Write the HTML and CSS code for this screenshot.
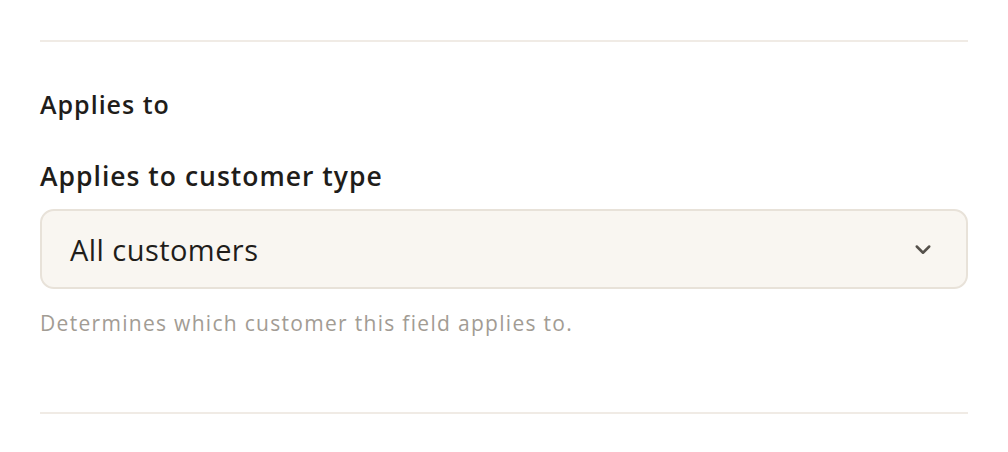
FILE: index.html
```html
<!DOCTYPE html>
<html>
<head>
<meta charset="utf-8">
<link rel="stylesheet" href="styles.css">
</head>
<body>
<div class="page">
  <hr class="divider">
  <section class="section">
    <h2 class="section-title">Applies to</h2>
    <div class="field">
      <label class="field-label">Applies to customer type</label>
      <div class="select">
        <span class="select-value">All customers</span>
        <svg class="chevron" width="20" height="20" viewBox="0 0 24 24" fill="none" stroke="currentColor" stroke-width="3" stroke-linecap="round" stroke-linejoin="round"><path d="M4.5 9l7.5 7.5 7.5-7.5"/></svg>
      </div>
      <p class="help">Determines which customer this field applies to.</p>
    </div>
  </section>
  <hr class="divider">
</div>
</body>
</html>
```

FILE: styles.css
```css
* { box-sizing: border-box; }
html, body { margin: 0; padding: 0; background: #fff; }
body { font-family: "Open Sans", Inter, "Liberation Sans", sans-serif; color: #1f1d1a; }
.page { padding: 40px 40px 0 40px; }
.divider { border: 0; height: 2px; background: #f0ebe5; margin: 0; }
.section { padding: 46px 0 76px 0; }
.section-title { margin: 0; font-size: 25px; font-weight: 600; line-height: 32px; letter-spacing: 1px; }
.field { margin-top: 40px; }
.field-label { display: block; font-size: 26.5px; font-weight: 600; line-height: 32px; letter-spacing: 1px; }
.select { margin-top: 17px; height: 80px; border: 2px solid #e8e2d9; border-radius: 14px; background: #f9f6f1; display: flex; align-items: center; justify-content: space-between; padding: 0 33px 0 28px; }
.select-value { font-size: 29px; font-weight: 400; color: #1f1d1a; letter-spacing: 0.45px; }
.chevron { color: #55514b; }
.help { margin: 21px 0 0 0; font-size: 21px; color: #a29c94; line-height: 26px; letter-spacing: 1.3px; }
```
